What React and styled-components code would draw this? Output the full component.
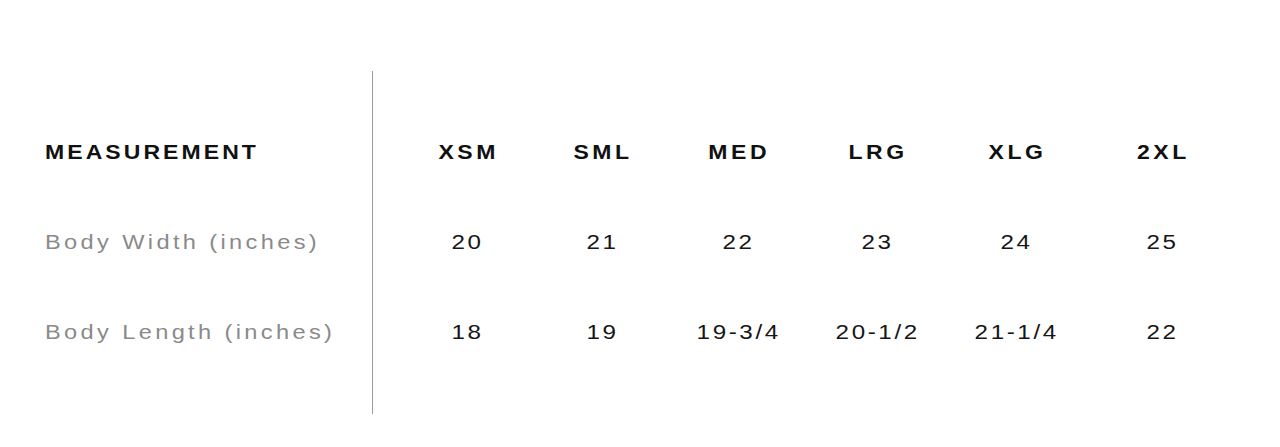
import React from "react";
import styled, { createGlobalStyle } from "styled-components";

const Global = createGlobalStyle`
  html, body { margin: 0; padding: 0; background: #fff; }
  body { font-family: "Liberation Sans", Arial, sans-serif; }
`;

const Page = styled.div`
  width: 1280px;
  height: 447px;
  padding-top: 71px;
  box-sizing: border-box;
  display: flex;
  align-items: flex-start;
`;

const LabelPanel = styled.div`
  width: 373px;
  box-sizing: border-box;
  padding: 36px 0 37px 45px;
  border-right: 1px solid #9a9a9a;
  display: flex;
  flex-direction: column;
`;

const ValuesPanel = styled.div`
  padding: 36px 0 37px 27px;
  display: grid;
  grid-template-columns: 134px 136px 136px 142px 136px 156px;
  grid-auto-rows: 90px;
`;

const Row = styled.div`
  height: 90px;
  display: flex;
  align-items: center;
`;

const Cell = styled.div`
  display: flex;
  align-items: center;
  justify-content: center;
`;

/* the reference face is a touch wider than Arial/Liberation */
const Wide = styled.span`
  display: inline-block;
  white-space: nowrap;
  transform: scaleX(1.18);
  transform-origin: ${(p) => (p.$left ? "left center" : "center")};
`;

const HeadText = styled(Wide)`
  font-size: 19.5px;
  font-weight: 700;
  letter-spacing: ${(p) => p.$ls}px;
  color: #111;
  margin-right: -${(p) => p.$ls}px;
`;

const LabelText = styled(Wide)`
  font-size: 20px;
  letter-spacing: 2.85px;
  color: #8a8a8a;
`;

const ValueText = styled(Wide)`
  font-size: 20.5px;
  letter-spacing: 2.2px;
  color: #161616;
  margin-right: -2.2px;
`;

const sizes = ["XSM", "SML", "MED", "LRG", "XLG", "2XL"];
const rows = [
  { label: "Body Width (inches)", values: ["20", "21", "22", "23", "24", "25"] },
  { label: "Body Length (inches)", values: ["18", "19", "19-3/4", "20-1/2", "21-1/4", "22"] },
];

export default function App() {
  return (
    <>
      <Global />
      <Page>
        <LabelPanel>
          <Row>
            <HeadText $left $ls={2.6}>MEASUREMENT</HeadText>
          </Row>
          {rows.map((r) => (
            <Row key={r.label}>
              <LabelText $left>{r.label}</LabelText>
            </Row>
          ))}
        </LabelPanel>
        <ValuesPanel>
          {sizes.map((s) => (
            <Cell key={s}>
              <HeadText $ls={3}>{s}</HeadText>
            </Cell>
          ))}
          {rows.map((r) =>
            r.values.map((v, i) => (
              <Cell key={r.label + i}>
                <ValueText>{v}</ValueText>
              </Cell>
            ))
          )}
        </ValuesPanel>
      </Page>
    </>
  );
}
